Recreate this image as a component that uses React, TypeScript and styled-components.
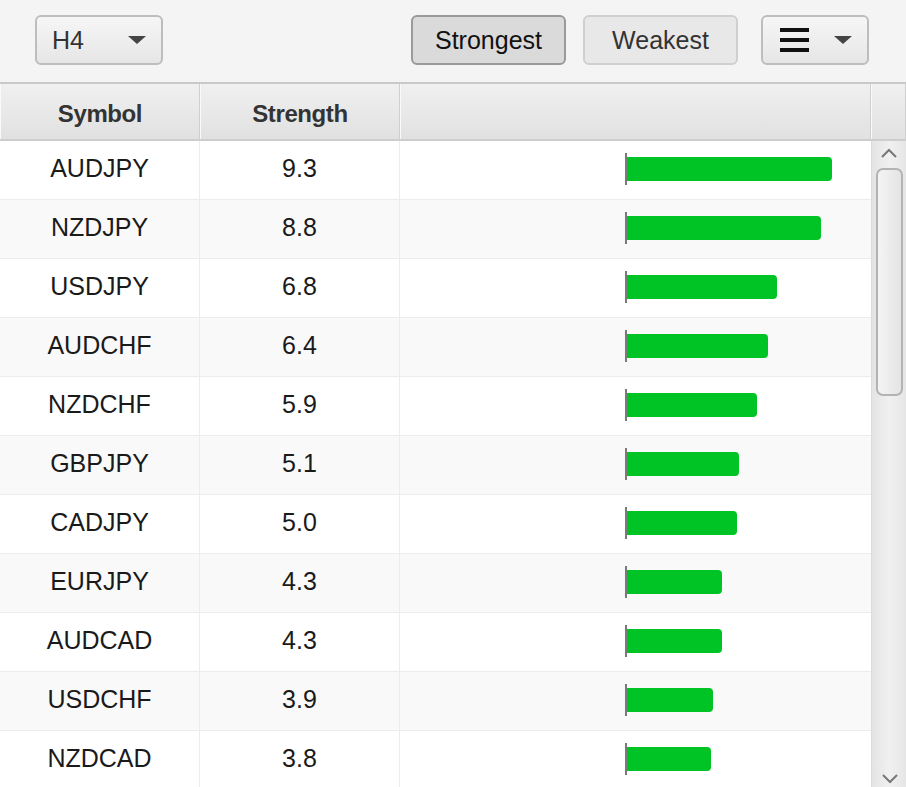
import styled, { createGlobalStyle } from "styled-components";

const GlobalStyle = createGlobalStyle`
  html, body {
    margin: 0;
    padding: 0;
    background: #ffffff;
    overflow: hidden;
  }
  body {
    font-family: "Liberation Sans", Arial, sans-serif;
  }
`;

const Frame = styled.div`
  width: 906px;
  height: 787px;
  display: flex;
  flex-direction: column;
  overflow: hidden;
  background: #fff;
`;

const Toolbar = styled.div`
  height: 84px;
  flex: 0 0 auto;
  box-sizing: border-box;
  display: flex;
  align-items: flex-start;
  padding: 15px 37px 0 35px;
  background: #f4f4f4;
  border-bottom: 2px solid #c9c9c9;
`;

const Spacer = styled.div`
  flex: 1;
`;

const Button = styled.button<{ $pressed?: boolean; $width: number }>`
  width: ${(p) => p.$width}px;
  height: 50px;
  box-sizing: border-box;
  border-radius: 6px;
  font-family: "Liberation Sans", Arial, sans-serif;
  font-size: 25px;
  color: ${(p) => (p.$pressed ? "#111" : "#333")};
  border: 2px solid ${(p) => (p.$pressed ? "#9a9a9a" : "#cfcfcf")};
  background: ${(p) => (p.$pressed ? "#dadada" : "#e8e8e8")};
  display: flex;
  align-items: center;
  justify-content: center;
  padding: 0;
  margin-left: ${(p) => (p.$pressed ? 0 : 17)}px;
`;

const Combo = styled.div<{ $width: number; $ml?: number }>`
  width: ${(p) => p.$width}px;
  height: 50px;
  box-sizing: border-box;
  margin-left: ${(p) => p.$ml ?? 0}px;
  border-radius: 6px;
  border: 2px solid #bdbdbd;
  background: linear-gradient(#f6f6f6, #e6e6e6);
  display: flex;
  align-items: center;
  justify-content: space-between;
  padding: 0 15px 0 15px;
  font-size: 25px;
  color: #333;
`;

const Caret = styled.div`
  width: 0;
  height: 0;
  border-left: 9px solid transparent;
  border-right: 9px solid transparent;
  border-top: 8px solid #444;
`;

const Burger = styled.div`
  width: 29px;
  height: 24px;
  display: flex;
  flex-direction: column;
  justify-content: space-between;
  margin-left: 2px;
  span {
    display: block;
    height: 4px;
    background: #111;
  }
`;

const Header = styled.div`
  height: 55px;
  flex: 0 0 auto;
  display: grid;
  grid-template-columns: 200px 200px 471px 35px;
  border-bottom: 2px solid #cdcdcd;
  background: linear-gradient(#f0f0f0, #e1e1e1);
`;

const HeadCell = styled.div`
  box-sizing: border-box;
  display: flex;
  align-items: center;
  justify-content: center;
  padding-top: 4px;
  border-left: 1px solid #fafafa;
  border-right: 1px solid #cfcfcf;
  font-size: 24px;
  font-weight: bold;
  letter-spacing: -0.4px;
  color: #333;
`;

const Body = styled.div`
  flex: 1;
  display: flex;
  min-height: 0;
`;

const Rows = styled.div`
  flex: 1;
  overflow: hidden;
`;

const Row = styled.div<{ $odd: boolean }>`
  height: 58px;
  display: grid;
  grid-template-columns: 200px 200px 1fr;
  border-bottom: 1px solid #ececec;
  background: ${(p) => (p.$odd ? "#f9f9f9" : "#ffffff")};
`;

const Cell = styled.div`
  box-sizing: border-box;
  display: flex;
  align-items: center;
  justify-content: center;
  padding-bottom: 4px;
  border-right: 1px solid #ececec;
  font-size: 25px;
  color: #1a1a1a;
`;

const BarCell = styled.div`
  display: flex;
  align-items: center;
  padding-left: 225px;
  padding-bottom: 2px;
`;

const Tick = styled.div`
  width: 2px;
  height: 32px;
  background: #7a7a7a;
`;

const Bar = styled.div`
  height: 24px;
  background: #00c426;
  border-radius: 0 4px 4px 0;
`;

const ScrollBar = styled.div`
  width: 35px;
  flex: 0 0 35px;
  box-sizing: border-box;
  border-left: 1px solid #dcdcdc;
  background: linear-gradient(90deg, #e4e4e4, #f0f0f0 50%, #e6e6e6);
  display: flex;
  flex-direction: column;
  align-items: center;
  position: relative;
`;

const Arrow = styled.svg`
  display: block;
  margin-top: 6px;
`;

const Thumb = styled.div`
  margin-top: 9px;
  width: 27px;
  height: 228px;
  box-sizing: border-box;
  border: 2px solid #b3b3b3;
  border-radius: 7px;
  background: linear-gradient(90deg, #f4f4f4, #e4e4e4);
`;

const DownArrow = styled.svg`
  position: absolute;
  bottom: 2px;
  left: 9px;
`;

const data: [string, number][] = [
  ["AUDJPY", 9.3],
  ["NZDJPY", 8.8],
  ["USDJPY", 6.8],
  ["AUDCHF", 6.4],
  ["NZDCHF", 5.9],
  ["GBPJPY", 5.1],
  ["CADJPY", 5.0],
  ["EURJPY", 4.3],
  ["AUDCAD", 4.3],
  ["USDCHF", 3.9],
  ["NZDCAD", 3.8],
];

const App = () => {
  return (
    <Frame>
      <GlobalStyle />
      <Toolbar>
        <Combo $width={128}>
          H4
          <Caret />
        </Combo>
        <Spacer />
        <Button $pressed $width={155}>
          Strongest
        </Button>
        <Button $width={155}>Weakest</Button>
        <Combo $width={108} $ml={23}>
          <Burger>
            <span />
            <span />
            <span />
          </Burger>
          <Caret />
        </Combo>
      </Toolbar>
      <Header>
        <HeadCell>Symbol</HeadCell>
        <HeadCell>Strength</HeadCell>
        <HeadCell />
        <HeadCell />
      </Header>
      <Body>
        <Rows>
          {data.map(([sym, val], i) => (
            <Row key={sym} $odd={i % 2 === 1}>
              <Cell>{sym}</Cell>
              <Cell>{val.toFixed(1)}</Cell>
              <BarCell>
                <Tick />
                <Bar style={{ width: Math.round(val * 22) }} />
              </BarCell>
            </Row>
          ))}
        </Rows>
        <ScrollBar>
          <Arrow width="18" height="12" viewBox="0 0 18 12">
            <path d="M2 10 L9 3 L16 10" fill="none" stroke="#777" strokeWidth="2" />
          </Arrow>
          <Thumb />
          <DownArrow width="18" height="12" viewBox="0 0 18 12">
            <path d="M2 2 L9 9 L16 2" fill="none" stroke="#777" strokeWidth="2" />
          </DownArrow>
        </ScrollBar>
      </Body>
    </Frame>
  );
};

export default App;
